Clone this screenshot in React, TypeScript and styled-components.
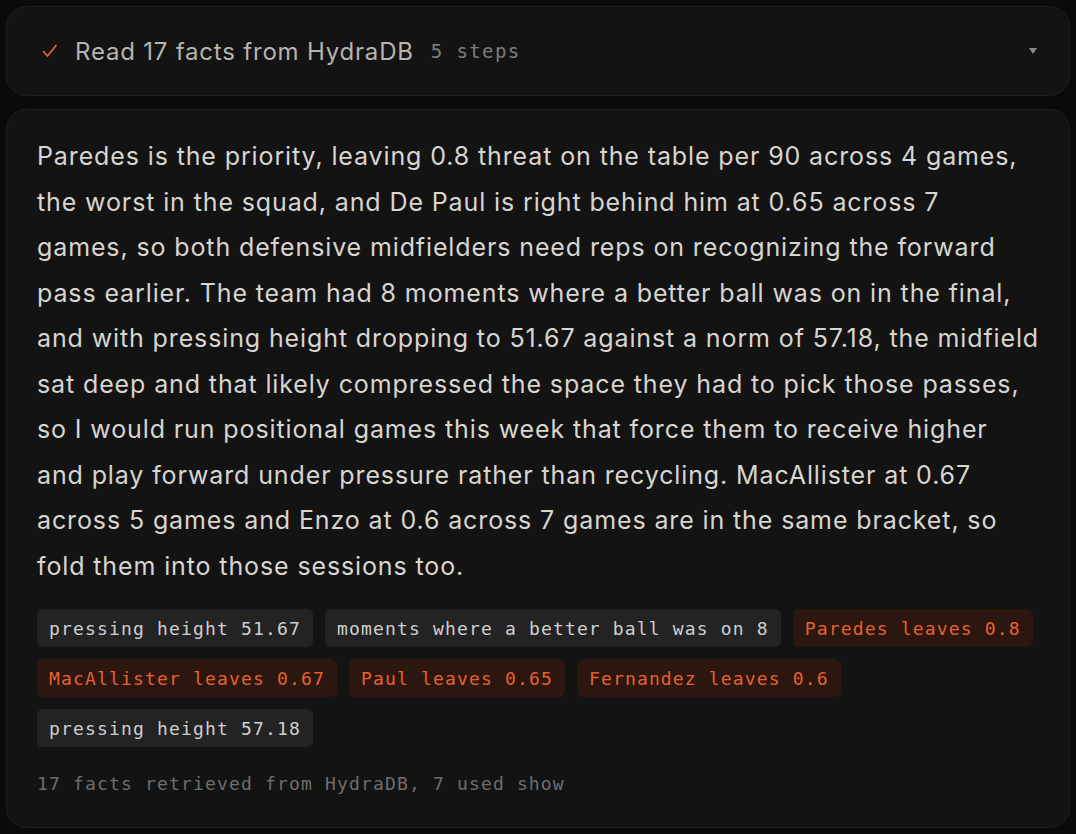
import React from 'react';
import styled, { createGlobalStyle } from 'styled-components';

const GlobalStyle = createGlobalStyle`
  html, body {
    margin: 0;
    padding: 0;
    background: #0a0a0a;
  }
  * {
    box-sizing: border-box;
  }
`;

const Page = styled.main`
  display: flex;
  flex-direction: column;
  gap: 13px;
  padding: 6px 6px 6px 6px;
  width: 1076px;
  min-height: 834px;
  font-family: Inter, 'Liberation Sans', sans-serif;
`;

const Card = styled.section`
  background: #131313;
  border: 1px solid #1d1d1d;
  border-radius: 20px;
`;

const Header = styled(Card)`
  height: 90px;
  display: flex;
  align-items: center;
  padding: 0 32px 0 32px;
`;

const Check = styled.svg`
  width: 18px;
  height: 18px;
  margin-left: 2px;
  flex-shrink: 0;
`;

const Title = styled.span`
  margin-left: 16px;
  font-size: 24px;
  color: #b7b4af;
  letter-spacing: 0.8px;
`;

const Mono = styled.span`
  font-family: 'DejaVu Sans Mono', 'Liberation Mono', monospace;
`;

const Steps = styled(Mono)`
  margin-left: 17px;
  font-size: 19px;
  letter-spacing: 1.4px;
  color: #7b7b7b;
`;

const Caret = styled.span`
  margin-left: auto;
  width: 0;
  height: 0;
  border-left: 4px solid transparent;
  border-right: 4px solid transparent;
  border-top: 6px solid #8a8a8a;
`;

const Body = styled(Card)`
  flex: 1;
  padding: 24px 30px 30px 30px;
`;

const Answer = styled.p`
  margin: 0;
  font-size: 25px;
  line-height: 45.5px;
  color: #d8d5d0;
  letter-spacing: 0.88px;
`;

const Line = styled.span`
  display: block;
  white-space: nowrap;
`;

const Chips = styled.div`
  display: flex;
  flex-wrap: wrap;
  gap: 12px;
  margin-top: 20px;
`;

const Chip = styled(Mono)<{ $hot?: boolean }>`
  display: inline-flex;
  align-items: center;
  height: 38px;
  padding: 0 12px;
  border-radius: 6px;
  font-size: 18px;
  letter-spacing: 1.16px;
  background: ${(p) => (p.$hot ? '#2b1610' : '#232323')};
  color: ${(p) => (p.$hot ? '#e8612c' : '#cfcfcf')};
`;

const Footnote = styled(Mono)`
  display: block;
  margin-top: 26px;
  font-size: 18px;
  letter-spacing: 1.16px;
  color: #6e6e6e;
`;

const ANSWER_LINES: string[] = [
  'Paredes is the priority, leaving 0.8 threat on the table per 90 across 4 games,',
  'the worst in the squad, and De Paul is right behind him at 0.65 across 7',
  'games, so both defensive midfielders need reps on recognizing the forward',
  'pass earlier. The team had 8 moments where a better ball was on in the final,',
  'and with pressing height dropping to 51.67 against a norm of 57.18, the midfield',
  'sat deep and that likely compressed the space they had to pick those passes,',
  'so I would run positional games this week that force them to receive higher',
  'and play forward under pressure rather than recycling. MacAllister at 0.67',
  'across 5 games and Enzo at 0.6 across 7 games are in the same bracket, so',
  'fold them into those sessions too.',
];

const CHIPS: { text: string; hot?: boolean }[] = [
  { text: 'pressing height 51.67' },
  { text: 'moments where a better ball was on 8' },
  { text: 'Paredes leaves 0.8', hot: true },
  { text: 'MacAllister leaves 0.67', hot: true },
  { text: 'Paul leaves 0.65', hot: true },
  { text: 'Fernandez leaves 0.6', hot: true },
  { text: 'pressing height 57.18' },
];

export default function App(): JSX.Element {
  return (
    <>
      <GlobalStyle />
      <Page>
        <Header>
          <Check viewBox='0 0 18 18' fill='none'>
            <path
              d='M2.5 9.5 L6.5 14 L15 3.5'
              stroke='#e8612c'
              strokeWidth='1.8'
              strokeLinecap='round'
              strokeLinejoin='round'
            />
          </Check>
          <Title>Read 17 facts from HydraDB</Title>
          <Steps>5 steps</Steps>
          <Caret />
        </Header>
        <Body>
          <Answer>
            {ANSWER_LINES.map((line) => (
              <Line key={line}>{line}</Line>
            ))}
          </Answer>
          <Chips>
            {CHIPS.map((chip) => (
              <Chip key={chip.text} $hot={chip.hot}>
                {chip.text}
              </Chip>
            ))}
          </Chips>
          <Footnote>17 facts retrieved from HydraDB, 7 used show</Footnote>
        </Body>
      </Page>
    </>
  );
}
